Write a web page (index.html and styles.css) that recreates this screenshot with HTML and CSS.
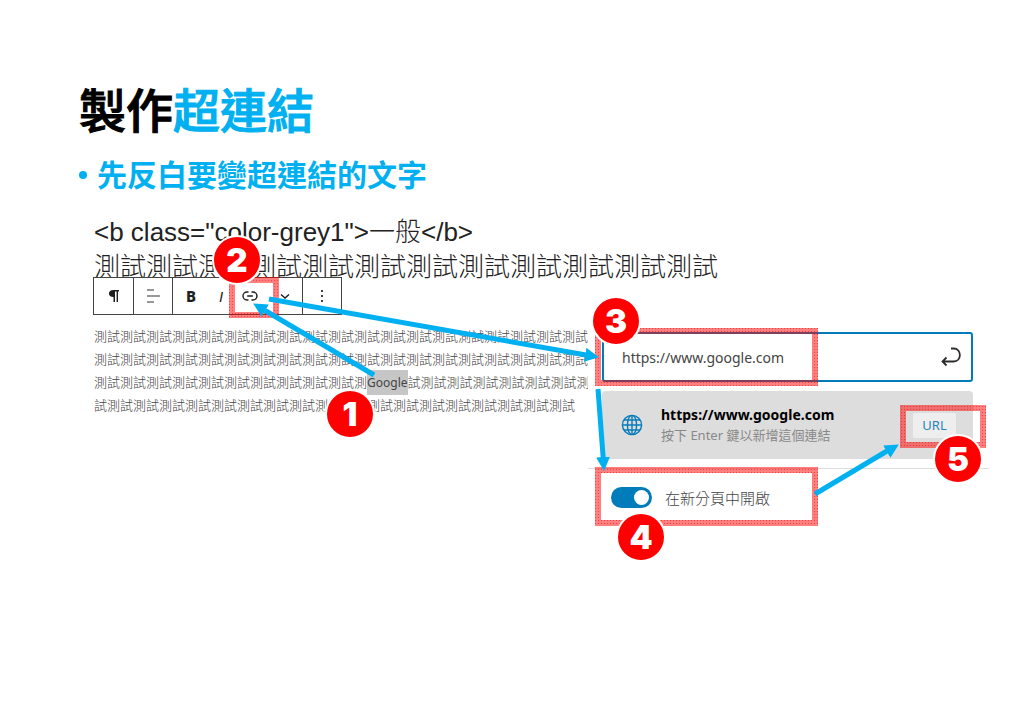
FILE: index.html
```html
<!DOCTYPE html>
<html lang="zh-Hant">
<head>
<meta charset="utf-8">
<meta name="viewport" content="width=device-width, initial-scale=1">
<title>製作超連結</title>
<link rel="stylesheet" href="styles.css">
</head>
<body>
<main class="slide">
  <header class="intro">
    <h1 class="title">製作<span class="accent">超連結</span></h1>
    <ul class="steps"><li>先反白要變超連結的文字</li></ul>
  </header>

  <section class="demo">
    <h2 class="sample-heading">&lt;b class="color-grey1"&gt;一般&lt;/b&gt;<br>測試測試測試測試測試測試測試測試測試測試測試測試</h2>
    <div class="columns">
      <div class="editor">
        <div class="toolbar" role="toolbar" aria-label="Block tools">
          <div class="group">
            <button class="tool tool-first" aria-label="Paragraph"><svg width="16" height="16" viewBox="0 0 16 16"><path d="M7.500 2H13V3.400H12V14H10.600V3.400H9V14H7.500V9C1.400 9 1.400 2 7.500 2Z" fill="#1e1e1e"/></svg></button>
          </div>
          <div class="group">
            <button class="tool tool-wide" aria-label="Align"><svg width="16" height="16" viewBox="0 0 16 16"><path d="M2 2H9M2 8H15M2 14H9" fill="none" stroke="#333" stroke-width="1.200"/></svg></button>
          </div>
          <div class="group">
            <button class="tool bold">B</button>
            <button class="tool italic">I</button>
            <button class="tool link" aria-label="Link"><svg width="16" height="12" viewBox="0 0 16 12"><path d="M6.500 2H5a4 4 0 0 0 0 8H6.500M9.500 2H11a4 4 0 0 1 0 8H9.500M5.200 6H10.800" fill="none" stroke="#1e1e1e" stroke-width="1.400"/></svg></button>
            <button class="tool more" aria-label="More formatting"><svg width="10" height="7" viewBox="0 0 10 7"><path d="M1 1.500L5 5L9 1.500" fill="none" stroke="#1e1e1e" stroke-width="1.400"/></svg></button>
          </div>
          <div class="group">
            <button class="tool tool-wide" aria-label="Options"><svg width="4" height="14" viewBox="0 0 4 14"><path d="M1 1h2v2H1zM1 6h2v2H1zM1 11h2v2H1z" fill="#444"/></svg></button>
          </div>
        </div>
        <p class="sample-text">測試測試測試測試測試測試測試測試測試測試測試測試測試測試測試測試測試測試測試測<br>測試測試測試測試測試測試測試測試測試測試測試測試測試測試測試測試測試測試測試測<br>測試測試測試測試測試測試測試測試測試測試測<mark>Google</mark>試測試測試測試測試測試測試測試<br>試測試測試測試測試測試測試測試測試測試測試測試測試測試測試測試測試測試測試</p>
      </div>

      <form class="link-panel" onsubmit="return false">
        <div class="url-field">
          <input class="url-input" type="text" value="https://www.google.com" aria-label="URL">
          <button class="submit" aria-label="Submit"><svg width="22" height="22" viewBox="0 0 22 22"><path d="M11 2.500H13.500C22 2.500 22 15.500 13.500 15.500H3M6.500 11.500L2.500 15.500L6.500 19.500" fill="none" stroke="#2c2c2c" stroke-width="1.800"/></svg></button>
        </div>
        <div class="suggestion">
          <svg class="globe" width="22" height="22" viewBox="0 0 22 22"><g fill="none" stroke="#087cba" stroke-width="1.400"><circle cx="11" cy="11" r="9.600"/><ellipse cx="11" cy="11" rx="4.600" ry="9.600"/><path d="M11 1.400V20.600M1.400 11H20.600M2.800 6H19.200M2.800 16H19.200"/></g></svg>
          <div class="details">
            <strong class="address">https://www.google.com</strong>
            <span class="hint">按下 Enter 鍵以新增這個連結</span>
          </div>
          <button class="url-tag">URL</button>
        </div>
        <label class="new-tab"><input class="switch" type="checkbox" role="switch" checked>在新分頁中開啟</label>
      </form>
    </div>
  </section>

  <svg class="notes" width="1024" height="724" viewBox="0 0 1024 724" aria-hidden="true">
    <defs>
      <pattern id="grain" width="3" height="3" patternUnits="userSpaceOnUse"><rect width="3" height="3" fill="#f00" fill-opacity=".5"/><rect width="1" height="1" x="1" y="1" fill="#f00010" fill-opacity=".5"/></pattern>
      <marker id="head" markerUnits="userSpaceOnUse" markerWidth="14" markerHeight="14" refX="13" refY="7" orient="auto"><path d="M0 0L14 7L0 14Z" fill="#00b0f0"/></marker>
    </defs>
    <g fill="none" stroke="url(#grain)" stroke-width="6">
      <rect x="232" y="280" width="44" height="35"/>
      <rect x="598" y="331" width="217" height="52"/>
      <rect x="598" y="470" width="217" height="53"/>
      <rect x="903" y="408" width="80" height="37"/>
    </g>
    <g fill="none" stroke="#00b0f0" stroke-width="5">
      <path d="M374 375L265 310.500"/><path d="M269 299L586 355"/><path d="M598 389L603.200 458"/><path d="M815 494L887 451"/>
    </g>
    <g fill="none" stroke="none">
      <path d="M374 375L254 304" marker-end="url(#head)"/><path d="M269 299L598 357" marker-end="url(#head)"/><path d="M598 389L604 470" marker-end="url(#head)"/><path d="M815 494L898 445" marker-end="url(#head)"/>
    </g>
  </svg>
  <span class="badge badge-1">1</span>
  <span class="badge badge-2">2</span>
  <span class="badge badge-3">3</span>
  <span class="badge badge-4">4</span>
  <span class="badge badge-5">5</span>
</main>
</body>
</html>
```

FILE: styles.css
```css
* { box-sizing: border-box; }
body { margin: 0; background: #fff; color: #222; font-family: "Noto Sans", "Noto Sans CJK TC", sans-serif; }
button, input { font: inherit; margin: 0; }
button { padding: 0; border: 0; background: none; cursor: pointer; }

.slide { position: relative; min-height: 100vh; padding: 73px 35px 40px 79px; overflow: hidden; }
.title { margin: 0; color: #000; font: 500 47px/70px "Noto Sans CJK TC", sans-serif; -webkit-text-stroke: 1px; }
.accent { color: #00b0f0; }
.steps { margin: 8px 0 0; padding: 0; list-style: none; color: #00b0f0; font: 700 30px/44px "Noto Sans CJK TC", sans-serif; }
.steps li { display: flex; align-items: center; gap: 10px; }
.steps li::before { content: ""; width: 8px; height: 8px; margin-top: 4px; border-radius: 50%; background: currentColor; }

.demo { margin: 20px 0 0 14px; }
.sample-heading { margin: 0; padding-left: 1px; color: #222; font: 300 26px/35px "Liberation Sans", "Noto Sans CJK TC", sans-serif; white-space: nowrap; }
.columns { position: relative; display: grid; grid-template-columns: 495fr 401fr; margin-top: -8px; }
.editor { min-width: 0; overflow: hidden; }
.toolbar { display: inline-flex; height: 38px; border: 1px solid #444; background: #fff; vertical-align: top; }
.group { display: flex; }
.group + .group { border-left: 1px solid #444; }
.tool { display: flex; align-items: center; justify-content: center; width: 36px; color: #1e1e1e; font-size: 15px; }
.tool-wide { width: 38px; }
.tool-first { width: 39px; }
.bold { font-weight: 800; }
.italic { width: 24px; font-family: "Liberation Sans", sans-serif; font-style: italic; }
.link { width: 34px; }
.more { width: 35px; }
.sample-text { margin: 10px 0 0; padding-left: 1px; color: #444; font: 300 13px/23px "Noto Sans", "Noto Sans CJK TC", sans-serif; white-space: nowrap; }
.sample-text mark { padding: 4px 0; background: #c6c6c6; color: #444; font-size: 12px; font-weight: 400; }

.link-panel { padding-top: 55px; }
.url-field { display: flex; align-items: center; height: 50px; margin: 0 16px 0 14px; padding: 0 9px 0 18px; border: 2px solid #007cba; border-radius: 3px; }
.url-input { flex: 1; min-width: 0; padding: 0; border: 0; outline: 0; background: none; color: #444; font-size: 14px; }
.submit { display: flex; }
.suggestion { display: flex; align-items: center; height: 68px; margin: 9px 16px 0 14px; padding: 0 17px 0 19px; border-radius: 4px; background: #ddd; }
.details { display: flex; flex: 1; flex-direction: column; margin-left: 18px; white-space: nowrap; }
.address { color: #000; font-size: 14px; line-height: 21px; }
.hint { color: #888; font-size: 13px; line-height: 21px; }
.url-tag { width: 43px; height: 25px; border-radius: 2px; background: #eee; color: #2585bd; font-size: 13px; }
.new-tab { display: flex; align-items: center; gap: 13px; height: 57px; margin-top: 9px; padding-left: 23px; border-top: 1px solid #ddd; color: #444; font-size: 15px; font-weight: 300; }
.switch { appearance: none; display: flex; align-items: center; justify-content: flex-end; width: 41px; height: 21px; padding: 3px; border-radius: 11px; background: #007cba; }
.switch::before { content: ""; width: 15px; height: 15px; border-radius: 50%; background: #fff; }
.switch:not(:checked) { justify-content: flex-start; background: #888; }

.notes { position: absolute; top: 0; left: 0; pointer-events: none; }
.badge { position: absolute; width: 50px; height: 50px; border: 2px solid #fff; border-radius: 50%; background: #f00; color: #fff; font: 900 33px/46px Inter, sans-serif; text-align: center; }
.badge-1 { left: 325px; top: 389px; }
.badge-2 { left: 212px; top: 235px; }
.badge-3 { left: 591px; top: 296px; }
.badge-4 { left: 616px; top: 512px; }
.badge-5 { left: 933px; top: 434px; }
```
